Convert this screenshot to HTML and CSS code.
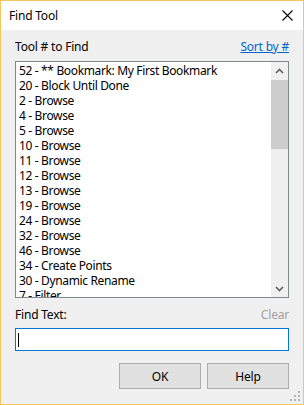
FILE: index.html
```html
<!DOCTYPE html>
<html>
<head>
  <meta charset="utf-8" />
  <title>Find Tool</title>
  <link rel="stylesheet" href="styles.css">
</head>
<body>
  <div class="window">
    <div class="titlebar">
      <span class="title">Find Tool</span>
      <svg class="close" width="11" height="11" viewBox="0 0 11 11">
        <path d="M0.5 0.5 L10.5 10.5 M10.5 0.5 L0.5 10.5" stroke="#000" stroke-width="1.1" fill="none"/>
      </svg>
    </div>

    <div class="content">
      <div class="row">
        <span class="label">Tool # to Find</span>
        <a class="link">Sort by #</a>
      </div>

      <div class="listbox">
        <ul class="items">
          <li>52 - ** Bookmark: My First Bookmark</li>
          <li>20 - Block Until Done</li>
          <li>2 - Browse</li>
          <li>4 - Browse</li>
          <li>5 - Browse</li>
          <li>10 - Browse</li>
          <li>11 - Browse</li>
          <li>12 - Browse</li>
          <li>13 - Browse</li>
          <li>19 - Browse</li>
          <li>24 - Browse</li>
          <li>32 - Browse</li>
          <li>46 - Browse</li>
          <li>34 - Create Points</li>
          <li>30 - Dynamic Rename</li>
          <li>7 - Filter</li>
        </ul>
        <div class="scrollbar">
          <div class="arrow">
            <svg width="9" height="6" viewBox="0 0 9 6"><path d="M1 5 L4.5 1.5 L8 5" stroke="#606060" stroke-width="1.6" fill="none"/></svg>
          </div>
          <div class="track"><div class="thumb"></div></div>
          <div class="arrow">
            <svg width="9" height="6" viewBox="0 0 9 6"><path d="M1 1 L4.5 4.5 L8 1" stroke="#606060" stroke-width="1.6" fill="none"/></svg>
          </div>
        </div>
      </div>

      <div class="row find-row">
        <span class="label">Find Text:</span>
        <span class="disabled">Clear</span>
      </div>

      <div class="textbox"><span class="caret"></span></div>

      <div class="buttons">
        <div class="button">OK</div>
        <div class="button">Help</div>
      </div>
    </div>

    <svg class="grip" width="11" height="11" viewBox="0 0 11 11" fill="#b4b4b4">
      <rect x="8" y="0" width="2" height="2"/>
      <rect x="4" y="4" width="2" height="2"/>
      <rect x="8" y="4" width="2" height="2"/>
      <rect x="0" y="8" width="2" height="2"/>
      <rect x="4" y="8" width="2" height="2"/>
      <rect x="8" y="8" width="2" height="2"/>
    </svg>
  </div>
</body>
</html>
```

FILE: styles.css
```css
html, body {
  margin: 0;
  padding: 0;
}

body {
  font-family: "Noto Sans", "Liberation Sans", sans-serif;
  font-size: 12px;
  letter-spacing: -0.2px;
  color: #000;
}

.window {
  position: relative;
  width: 304px;
  height: 405px;
  box-sizing: border-box;
  border: 1px solid #f5c660;
  background: #f0f0f0;
  overflow: hidden;
}

.titlebar {
  height: 29px;
  background: #fff;
  display: flex;
  align-items: center;
  justify-content: space-between;
  padding: 0 10px 0 8px;
}

.title {
  line-height: 16px;
}

.content {
  padding: 9px 14px 0 14px;
  display: flex;
  flex-direction: column;
}

.row {
  display: flex;
  justify-content: space-between;
  line-height: 16px;
  height: 16px;
}

.link {
  color: #0066cc;
  text-decoration: underline;
  cursor: pointer;
}

.disabled {
  color: #a0a0a0;
}

.listbox {
  margin-top: 6px;
  height: 237px;
  box-sizing: border-box;
  border: 1px solid #828790;
  background: #fff;
  display: flex;
  overflow: hidden;
}

.items {
  flex: 1;
  list-style: none;
  margin: 0;
  padding: 1px 0 0 3px;
  overflow: hidden;
  letter-spacing: -0.35px;
}

.items li {
  line-height: 15px;
  height: 15px;
  white-space: nowrap;
}

.scrollbar {
  width: 17px;
  background: #f0f0f0;
  display: flex;
  flex-direction: column;
}

.arrow {
  height: 17px;
  display: flex;
  align-items: center;
  justify-content: center;
}

.track {
  flex: 1;
  padding-top: 1px;
}

.thumb {
  height: 69px;
  background: #cdcdcd;
}

.find-row {
  margin-top: 9px;
}

.textbox {
  margin-top: 5px;
  height: 23px;
  box-sizing: border-box;
  border: 1px solid #0078d7;
  background: #fff;
  display: flex;
  align-items: center;
  padding-left: 2px;
}

.caret {
  width: 1px;
  height: 14px;
  background: #000;
}

.buttons {
  margin-top: 12px;
  display: flex;
  justify-content: flex-end;
  gap: 6px;
}

.button {
  width: 82px;
  height: 26px;
  box-sizing: border-box;
  border: 1px solid #adadad;
  background: #e1e1e1;
  display: flex;
  align-items: center;
  justify-content: center;
}

.grip {
  position: absolute;
  right: 2px;
  bottom: 2px;
}
```
